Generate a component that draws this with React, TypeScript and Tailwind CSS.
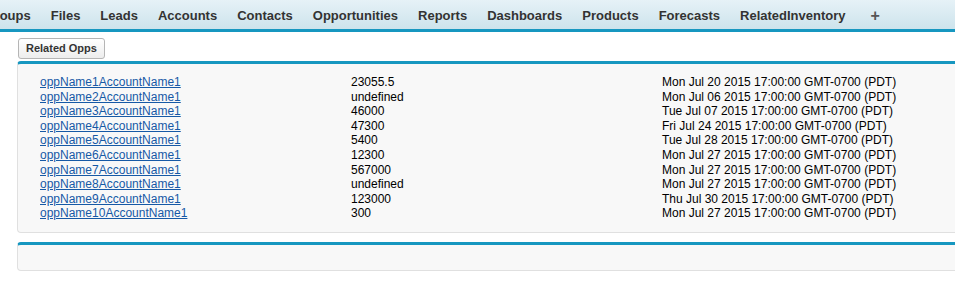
import React from 'react';

const TABS = ['Groups', 'Files', 'Leads', 'Accounts', 'Contacts', 'Opportunities', 'Reports', 'Dashboards', 'Products', 'Forecasts', 'RelatedInventory'];

const ROWS: [string, string, string][] = [
  ['oppName1AccountName1', '23055.5', 'Mon Jul 20 2015 17:00:00 GMT-0700 (PDT)'],
  ['oppName2AccountName1', 'undefined', 'Mon Jul 06 2015 17:00:00 GMT-0700 (PDT)'],
  ['oppName3AccountName1', '46000', 'Tue Jul 07 2015 17:00:00 GMT-0700 (PDT)'],
  ['oppName4AccountName1', '47300', 'Fri Jul 24 2015 17:00:00 GMT-0700 (PDT)'],
  ['oppName5AccountName1', '5400', 'Tue Jul 28 2015 17:00:00 GMT-0700 (PDT)'],
  ['oppName6AccountName1', '12300', 'Mon Jul 27 2015 17:00:00 GMT-0700 (PDT)'],
  ['oppName7AccountName1', '567000', 'Mon Jul 27 2015 17:00:00 GMT-0700 (PDT)'],
  ['oppName8AccountName1', 'undefined', 'Mon Jul 27 2015 17:00:00 GMT-0700 (PDT)'],
  ['oppName9AccountName1', '123000', 'Thu Jul 30 2015 17:00:00 GMT-0700 (PDT)'],
  ['oppName10AccountName1', '300', 'Mon Jul 27 2015 17:00:00 GMT-0700 (PDT)'],
];

const App: React.FC = () => {
  return (
    <div className="w-[955px] h-[289px] overflow-hidden bg-white font-['Liberation_Sans',Arial,sans-serif]">
      {/* tab bar, scrolled so the first tab is cut off */}
      <div className="h-[32px] bg-gradient-to-b from-[#e6f2f7] to-[#cde3ec] border-b-[3px] border-[#1797c0] overflow-hidden">
        <div className="flex items-center h-[29px] pt-[2px] ml-[-25.5px] text-[13px] font-bold text-[#333] whitespace-nowrap">
          {TABS.map((t) => (
            <span key={t} className="px-[10px]">{t}</span>
          ))}
          <span className="pl-[15px] text-[16px] text-[#555]">+</span>
        </div>
      </div>

      <div className="pl-[17px]">
        <div className="flex pt-[6px] pl-[1px] pb-[2px]">
          <button className="h-[21px] px-[7px] text-[11px] font-bold text-[#333] border border-[#b5b5b5] rounded-[3px] bg-gradient-to-b from-white to-[#ededed]">
            Related Opps
          </button>
        </div>

        <div className="border-t-[3px] border-t-[#1797c0] border-l border-b border-[#e0e0e0] rounded-tl-[4px] rounded-bl-[4px] bg-[#f8f8f8] pt-[11px] pb-[11px] pl-[22px]">
          <table className="border-collapse text-[12px] text-black">
            <tbody>
              {ROWS.map(([name, amt, date]) => (
                <tr key={name} className="h-[14.6px] leading-[14px]">
                  <td className="w-[311px] p-0 align-top">
                    <a href="#" className="text-[#1659a6] underline">{name}</a>
                  </td>
                  <td className="w-[311px] p-0 align-top">{amt}</td>
                  <td className="p-0 align-top">{date}</td>
                </tr>
              ))}
            </tbody>
          </table>
        </div>

        <div className="mt-[9px] h-[29px] border-t-[3px] border-t-[#1797c0] border-l border-b border-[#e0e0e0] rounded-tl-[4px] rounded-bl-[4px] bg-[#f8f8f8]" />
      </div>
    </div>
  );
};

export default App;
